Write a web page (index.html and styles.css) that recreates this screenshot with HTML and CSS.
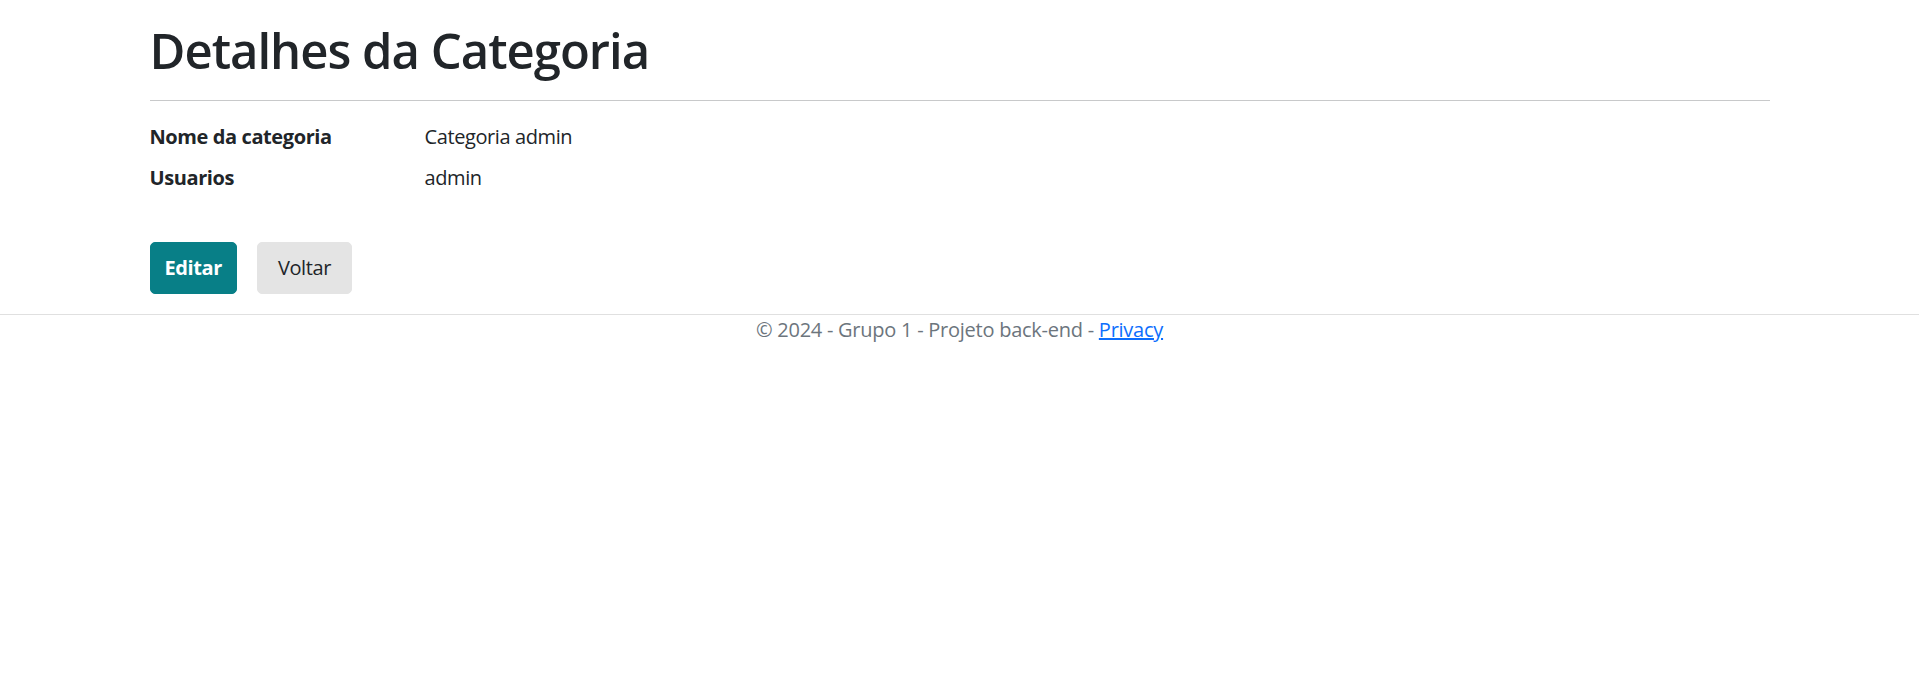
FILE: index.html
```html
<!DOCTYPE html>
<html lang="pt-BR">
<head>
<meta charset="utf-8">
<title>Detalhes da Categoria</title>
<link rel="stylesheet" href="styles.css">
</head>
<body>
<main class="container">
  <h1 class="title">Detalhes da Categoria</h1>
  <hr class="divider">
  <dl class="details">
    <dt class="details-label">Nome da categoria</dt>
    <dd class="details-value">Categoria admin</dd>
    <dt class="details-label">Usuarios</dt>
    <dd class="details-value">admin</dd>
  </dl>
  <div class="actions">
    <a class="btn btn-primary" href="#">Editar</a>
    <a class="btn btn-secondary" href="#">Voltar</a>
  </div>
</main>
<footer class="footer">
  &copy; 2024 - Grupo 1 - Projeto back-end - <a class="footer-link" href="#">Privacy</a>
</footer>
</body>
</html>
```

FILE: styles.css
```css
html, body {
  margin: 0;
  padding: 0;
  background: #fff;
}

body {
  font-family: "Open Sans", "Noto Sans", sans-serif;
  font-size: 20px;
  line-height: 30px;
  color: #212529;
  letter-spacing: -0.4px;
}

.container {
  width: 1620px;
  margin: 0 auto;
  padding: 21px 0 20px;
}

.title {
  margin: 0 0 21px;
  font-size: 49px;
  line-height: 58px;
  font-weight: 600;
  letter-spacing: -1px;
  color: #212529;
}

.divider {
  margin: 0;
  border: 0;
  border-top: 1px solid #c8c9ca;
}

.details {
  display: grid;
  grid-template-columns: 275px 1fr;
  margin: 21px 0 0;
}

.details-label {
  font-weight: 700;
  margin: 0;
}

.details-value {
  margin: 0 0 11px;
}

.actions {
  display: flex;
  gap: 20px;
  margin-top: 38px;
}

.btn {
  display: inline-block;
  padding: 10px 14px;
  border: 1px solid transparent;
  border-radius: 5px;
  font-size: 20px;
  line-height: 30px;
  text-decoration: none;
}

.btn-primary {
  background: #087f87;
  border-color: #087f87;
  color: #fff;
  font-weight: 700;
}

.btn-secondary {
  background: #e4e4e4;
  border-color: #e4e4e4;
  color: #212529;
  padding: 10px 20px;
}

.footer {
  border-top: 1px solid #e0e0e0;
  text-align: center;
  color: #6c757d;
  line-height: 30px;
  letter-spacing: -0.25px;
}

.footer-link {
  color: #0d6efd;
  text-decoration: underline;
}
```
